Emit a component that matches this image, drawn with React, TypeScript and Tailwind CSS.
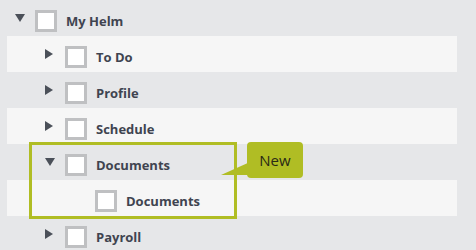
import React from "react";

const Down = () => (
  <svg width="10" height="8" viewBox="0 0 10 8" className="block">
    <polygon points="0,0 10,0 5,8" fill="#4b5059" />
  </svg>
);
const Right = () => (
  <svg width="8" height="10" viewBox="0 0 8 10" className="block">
    <polygon points="0,0 8,5 0,10" fill="#4b5059" />
  </svg>
);

type RowProps = {
  level: number;
  label: string;
  arrow: "down" | "right" | "none";
  light?: boolean;
};

const Row = ({ level, label, arrow, light }: RowProps) => (
  <div
    className={`h-9 flex items-center mr-[19px] ${light ? "bg-[#f6f6f6]" : ""}`}
    style={{ paddingLeft: 8 + level * 30 }}
  >
    <div className="w-[20px] flex items-center">
      {arrow === "down" && <Down />}
      {arrow === "right" && <Right />}
    </div>
    <div className="mt-[6px] w-[22px] h-[22px] border-[3px] border-[#bfc0c2] bg-white box-border" />
    <div className="mt-[6px] ml-[9px] text-[13px] leading-[22px] font-bold text-[#3f4450]">
      {label}
    </div>
  </div>
);

export default function App() {
  return (
    <div
      className="relative w-[476px] h-[250px] bg-[#e6e7e9] overflow-hidden pl-[7px]"
      style={{ fontFamily: "'Open Sans', sans-serif" }}
    >
      <Row level={0} label="My Helm" arrow="down" />
      <Row level={1} label="To Do" arrow="right" light />
      <Row level={1} label="Profile" arrow="right" />
      <Row level={1} label="Schedule" arrow="right" light />
      <Row level={1} label="Documents" arrow="down" />
      <Row level={2} label="Documents" arrow="none" light />
      <Row level={1} label="Payroll" arrow="right" />

      <div className="absolute left-[29px] top-[142px] w-[208px] h-[77px] border-[3px] border-[#b0bd24]" />
      <svg className="absolute left-[220px] top-[160px]" width="30" height="20" viewBox="0 0 30 20">
        <polygon points="1,15 30,2 30,15" fill="#b0bd24" />
      </svg>
      <div className="absolute left-[247px] top-[142px] w-[56px] h-[36px] rounded-[4px] bg-[#b0bd24] flex items-center justify-center text-[15px] text-[#2a2a16]">
        New
      </div>
    </div>
  );
}
